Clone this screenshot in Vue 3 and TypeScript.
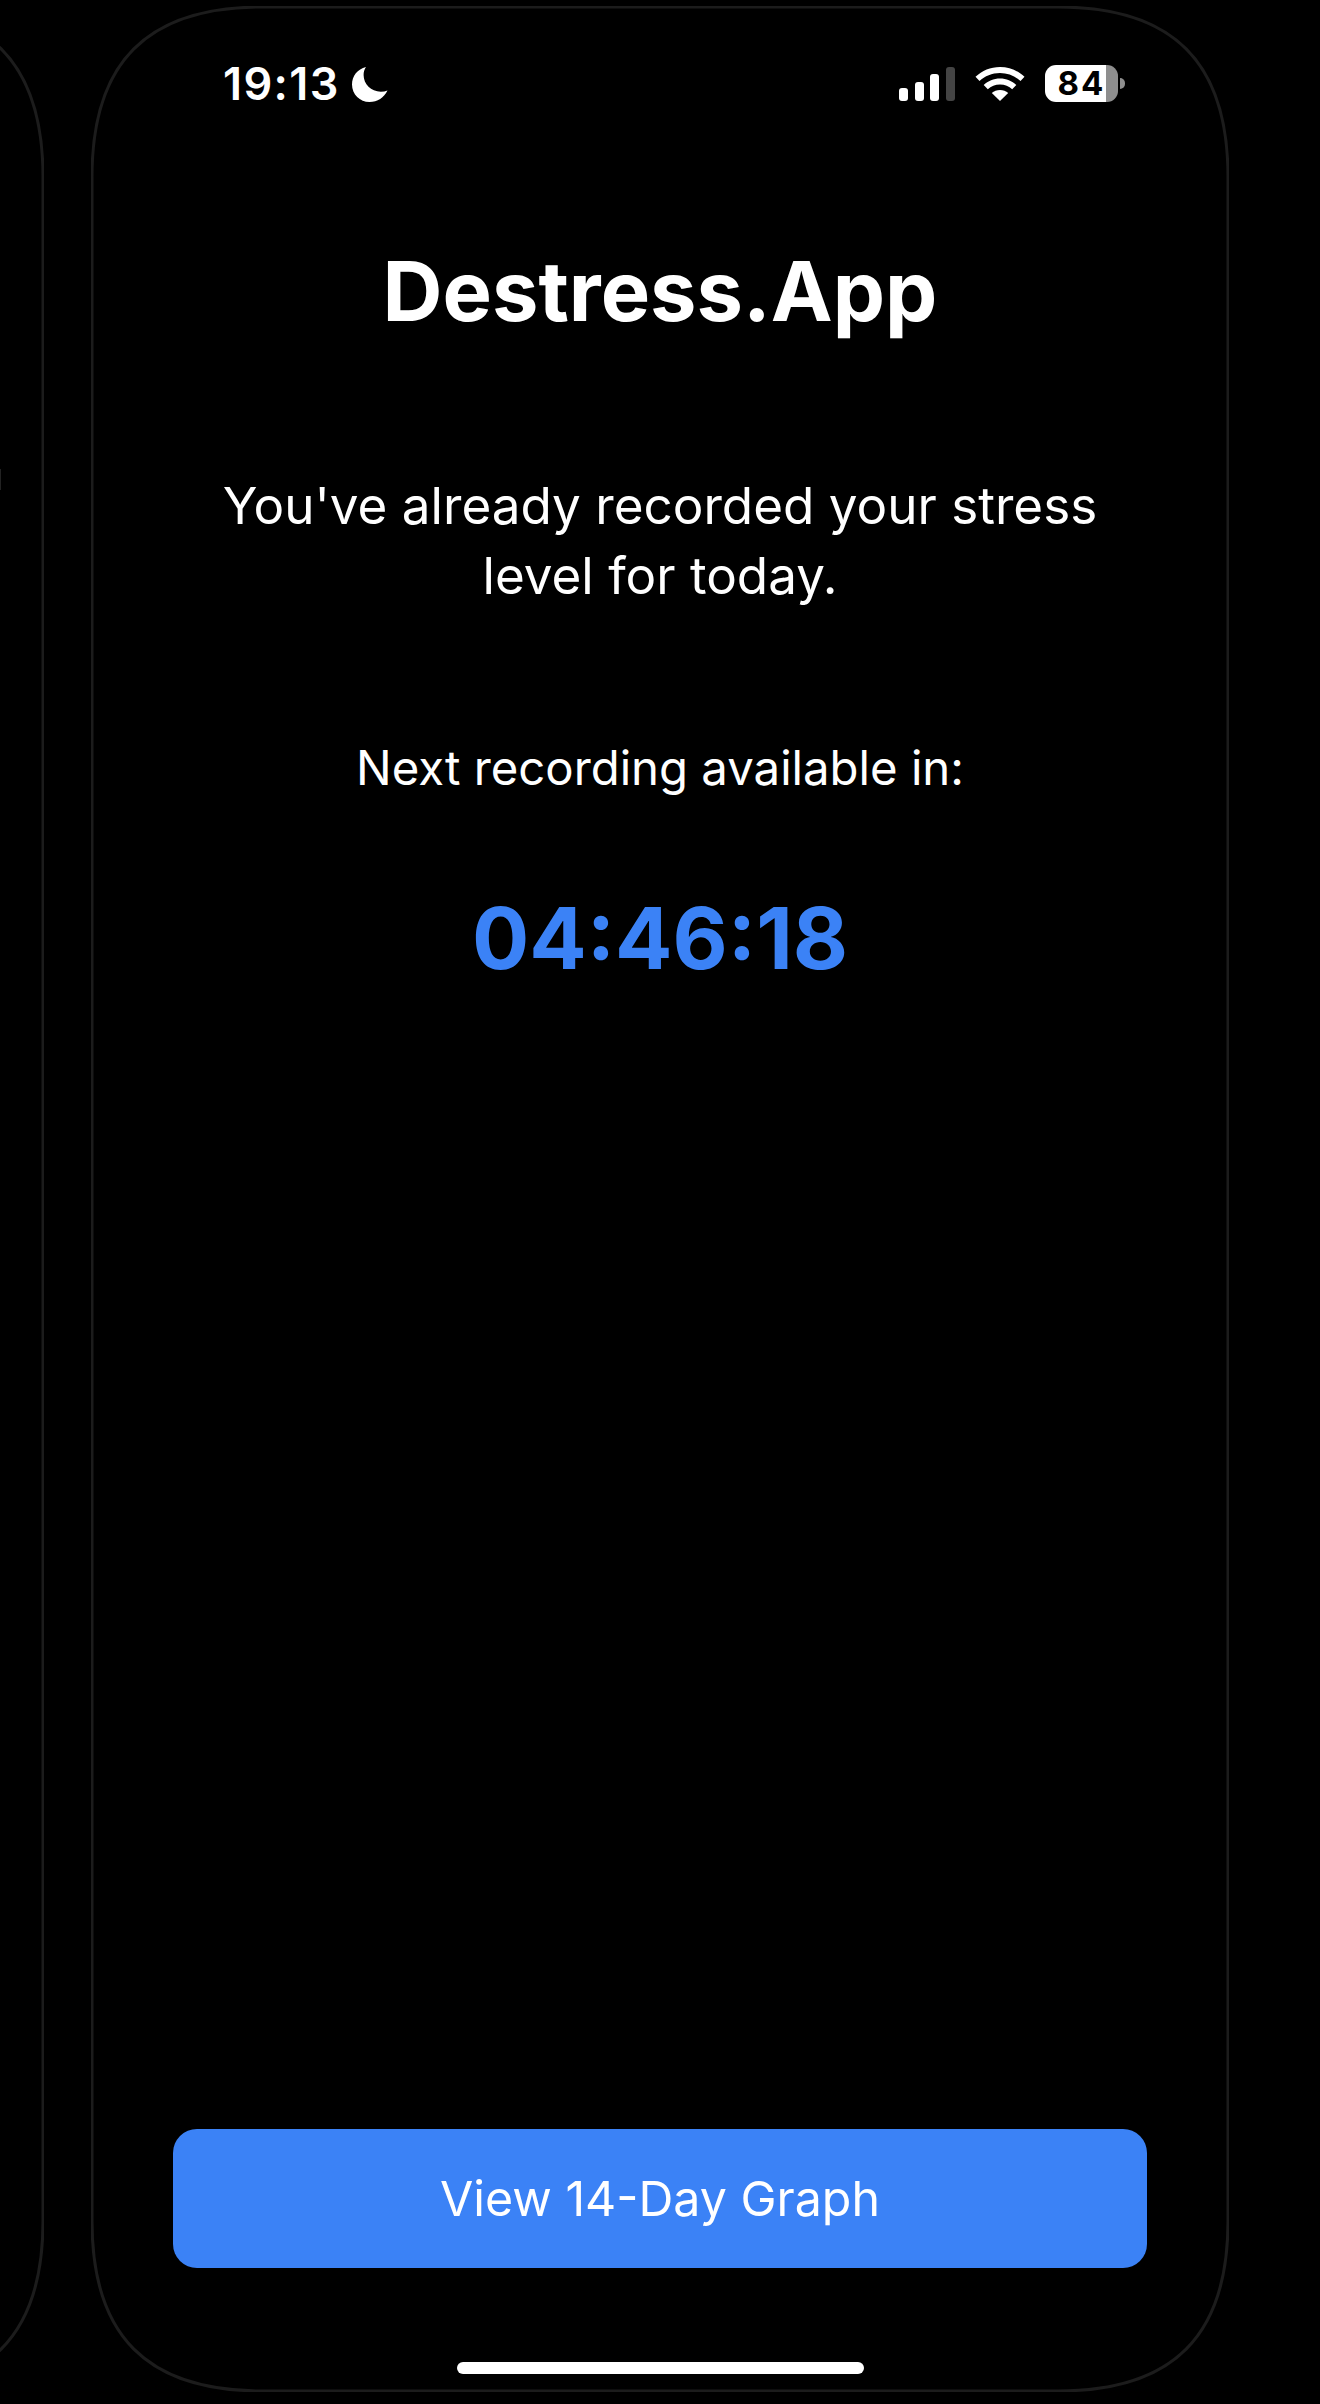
<script setup lang="ts">
const framePath =
  'M1 171 C1 56 56 1 171 1 L967 1 C1082 1 1137 56 1137 171 L1137 2215 C1137 2330 1082 2385 967 2385 L171 2385 C56 2385 1 2330 1 2215 Z'
</script>

<template>
  <div class="page">
    <div class="device device-prev">
      <svg class="outline" width="1138" height="2386" viewBox="0 0 1138 2386">
        <path :d="framePath" />
      </svg>
    </div>
    <main class="device">
      <svg class="outline" width="1138" height="2386" viewBox="0 0 1138 2386">
        <path :d="framePath" />
      </svg>
      <header class="status">
        <div class="status-left">
          <span class="clock">19:13</span>
          <svg class="moon" width="36" height="35" viewBox="0 0 36 35">
            <path d="M14 0 C5.5 2 0 9 0 17.5 C0 27.5 8 35 17.5 35 C25.5 35 32 30.5 35.5 23.5 C33.5 24.3 31.2 24.7 28.8 24.7 C19 24.7 11.6 17 11.6 8 C11.6 5 12.4 2.3 14 0 Z" />
          </svg>
        </div>
        <div class="status-right">
          <div class="signal">
            <span class="bar b1"></span>
            <span class="bar b2"></span>
            <span class="bar b3"></span>
            <span class="bar b4"></span>
          </div>
          <svg class="wifi" width="50" height="34" viewBox="0 0 50 34">
            <path d="M25 0 C34.5 0 43 3.7 49.5 9.8 L45.5 14 C40.2 9 33 6 25 6 C17 6 9.8 9 4.5 14 L0.5 9.8 C7 3.7 15.5 0 25 0 Z" />
            <path d="M25 11.5 C31.3 11.5 37 14 41.3 18 L37.2 22.2 C34 19.2 29.7 17.4 25 17.4 C20.3 17.4 16 19.2 12.8 22.2 L8.7 18 C13 14 18.7 11.5 25 11.5 Z" />
            <path d="M25 23 C28.2 23 31 24.2 33.2 26.1 L25 34 L16.8 26.1 C19 24.2 21.8 23 25 23 Z" />
          </svg>
          <div class="battery">
            <div class="cell"><span class="level">84</span></div>
            <span class="tip"></span>
          </div>
        </div>
      </header>

      <h1 class="title">Destress.App</h1>
      <p class="message">You've already recorded your stress<br />level for today.</p>
      <p class="next">Next recording available in:</p>
      <p class="timer">04:46:18</p>

      <button class="graph-button" type="button">View 14-Day Graph</button>
      <span class="home-indicator"></span>
    </main>
  </div>
</template>

<style>
html,
body {
  margin: 0;
  background: #000;
}
</style>

<style scoped>
.page {
  position: relative;
  width: 1320px;
  height: 2404px;
  overflow: hidden;
  background: #000;
  display: flex;
  align-items: flex-start;
  gap: 47px;
  padding: 6px 0 0 0;
  box-sizing: border-box;
  font-family: Inter, "Liberation Sans", sans-serif;
  color: #fff;
}
.page::before {
  content: "";
  position: absolute;
  left: 0;
  top: 469px;
  width: 1px;
  height: 21px;
  background: #222;
}
.device {
  position: relative;
  flex: none;
  width: 1138px;
  height: 2386px;
  display: flex;
  flex-direction: column;
  align-items: center;
}
.device-prev {
  margin-left: -1094px;
}
.outline {
  position: absolute;
  inset: 0;
}
.outline path {
  fill: none;
  stroke: #1c1c1c;
  stroke-width: 3;
}
.status {
  width: 902px;
  height: 37px;
  margin: 59px 0 0 132px;
  align-self: flex-start;
  display: flex;
  justify-content: space-between;
  align-items: center;
  position: relative;
}
.status-left,
.status-right {
  display: flex;
  align-items: center;
}
.status-left {
  gap: 12px;
}
.clock {
  font-size: 45px;
  font-weight: 600;
  line-height: 37px;
  letter-spacing: 1.4px;
}
.moon {
  margin-top: 2px;
  fill: #fff;
}
.status-right {
  gap: 20px;
}
.signal {
  display: flex;
  align-items: flex-end;
  gap: 6.7px;
  height: 34px;
}
.bar {
  width: 9px;
  border-radius: 3px;
  background: #fff;
}
.b1 { height: 13px; }
.b2 { height: 19px; }
.b3 { height: 27px; }
.b4 { height: 34px; background: #444; }
.wifi {
  fill: #fff;
}
.battery {
  display: flex;
  align-items: center;
  gap: 2px;
}
.cell {
  width: 73px;
  height: 37px;
  border-radius: 11px;
  background: linear-gradient(to right, #fff 84%, #8e8e8e 84%);
  display: flex;
  align-items: center;
  justify-content: center;
}
.level {
  color: #000;
  font-size: 33px;
  font-weight: 700;
  line-height: 37px;
  letter-spacing: 2px;
}
.tip {
  width: 5px;
  height: 11px;
  border-radius: 0 5px 5px 0;
  background: #8e8e8e;
}
.title {
  position: relative;
  margin: 139px 0 0;
  font-size: 83px;
  font-weight: 700;
  line-height: 100px;
}
.message {
  position: relative;
  margin: 129px 0 0;
  font-size: 51.2px;
  font-weight: 400;
  line-height: 70px;
  text-align: center;
}
.next {
  position: relative;
  margin: 128px 0 0;
  font-size: 47.3px;
  line-height: 60px;
}
.timer {
  position: relative;
  margin: 91px 0 0;
  font-size: 85px;
  font-weight: 750;
  line-height: 100px;
  color: #3b82f6;
}
.graph-button {
  position: relative;
  width: 974px;
  height: 139px;
  margin-top: auto;
  border: none;
  border-radius: 24px;
  background: #3b82f6;
  color: #fff;
  font-family: inherit;
  font-size: 48.3px;
}
.home-indicator {
  position: relative;
  width: 407px;
  height: 12px;
  margin: 94px 0 18px;
  border-radius: 6px;
  background: #fff;
}
</style>
